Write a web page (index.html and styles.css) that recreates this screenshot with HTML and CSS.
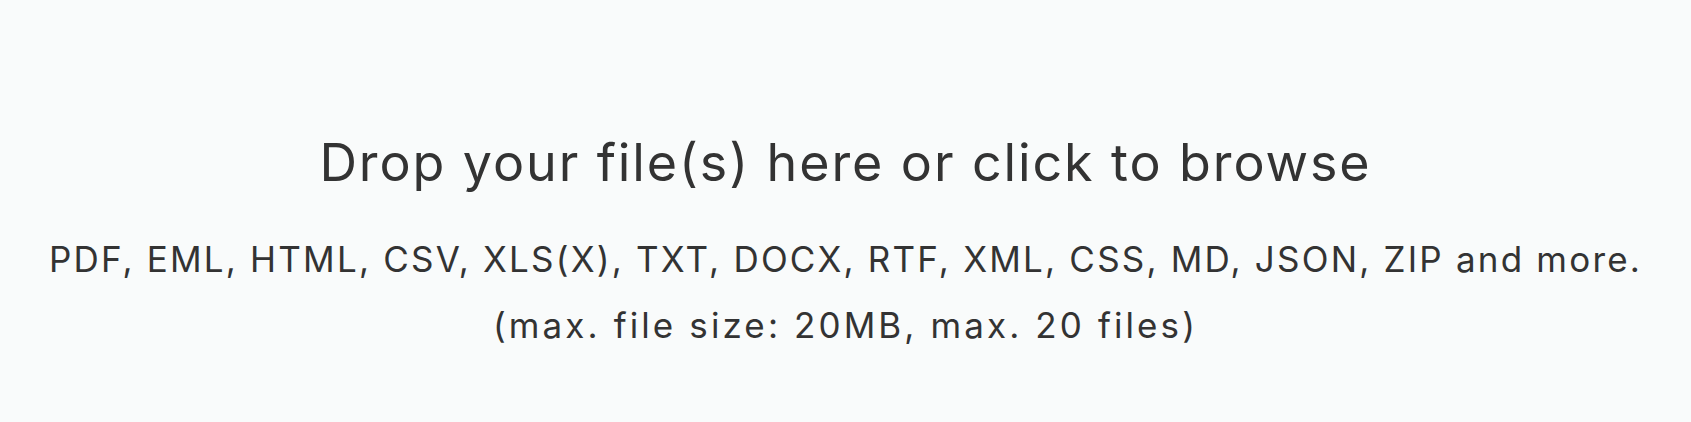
FILE: index.html
```html
<!DOCTYPE html>
<html lang="en">
<head>
<meta charset="utf-8">
<title>Upload</title>
<link rel="stylesheet" href="styles.css">
</head>
<body>
<main class="dropzone">
  <h1 class="dropzone-title">Drop your file(s) here or click to browse</h1>
  <p class="dropzone-info">
    <span class="info-types">PDF, EML, HTML, CSV, XLS(X), TXT, DOCX, RTF, XML, CSS, MD, JSON, ZIP and more.</span>
    <span class="info-limits">(max. file size: 20MB, max. 20 files)</span>
  </p>
</main>
</body>
</html>
```

FILE: styles.css
```css
html, body {
  margin: 0;
  padding: 0;
  background: #f9fbfb;
  height: 100%;
}
.dropzone {
  display: flex;
  flex-direction: column;
  align-items: center;
  padding-top: 133px;
  font-family: Inter, "Noto Sans", sans-serif;
  font-variant-ligatures: none;
  color: #333333;
  text-align: center;
}
.dropzone-title {
  margin: 0;
  font-size: 52px;
  font-weight: 400;
  line-height: 60px;
  letter-spacing: 1.9px;
}
.dropzone-info {
  margin: 33px 0 0;
  font-size: 35px;
  line-height: 66px;
  font-weight: 400;
  display: flex;
  flex-direction: column;
  align-items: center;
}
.info-types {
  letter-spacing: 2.2px;
}
.info-limits {
  letter-spacing: 3.1px;
}
```
